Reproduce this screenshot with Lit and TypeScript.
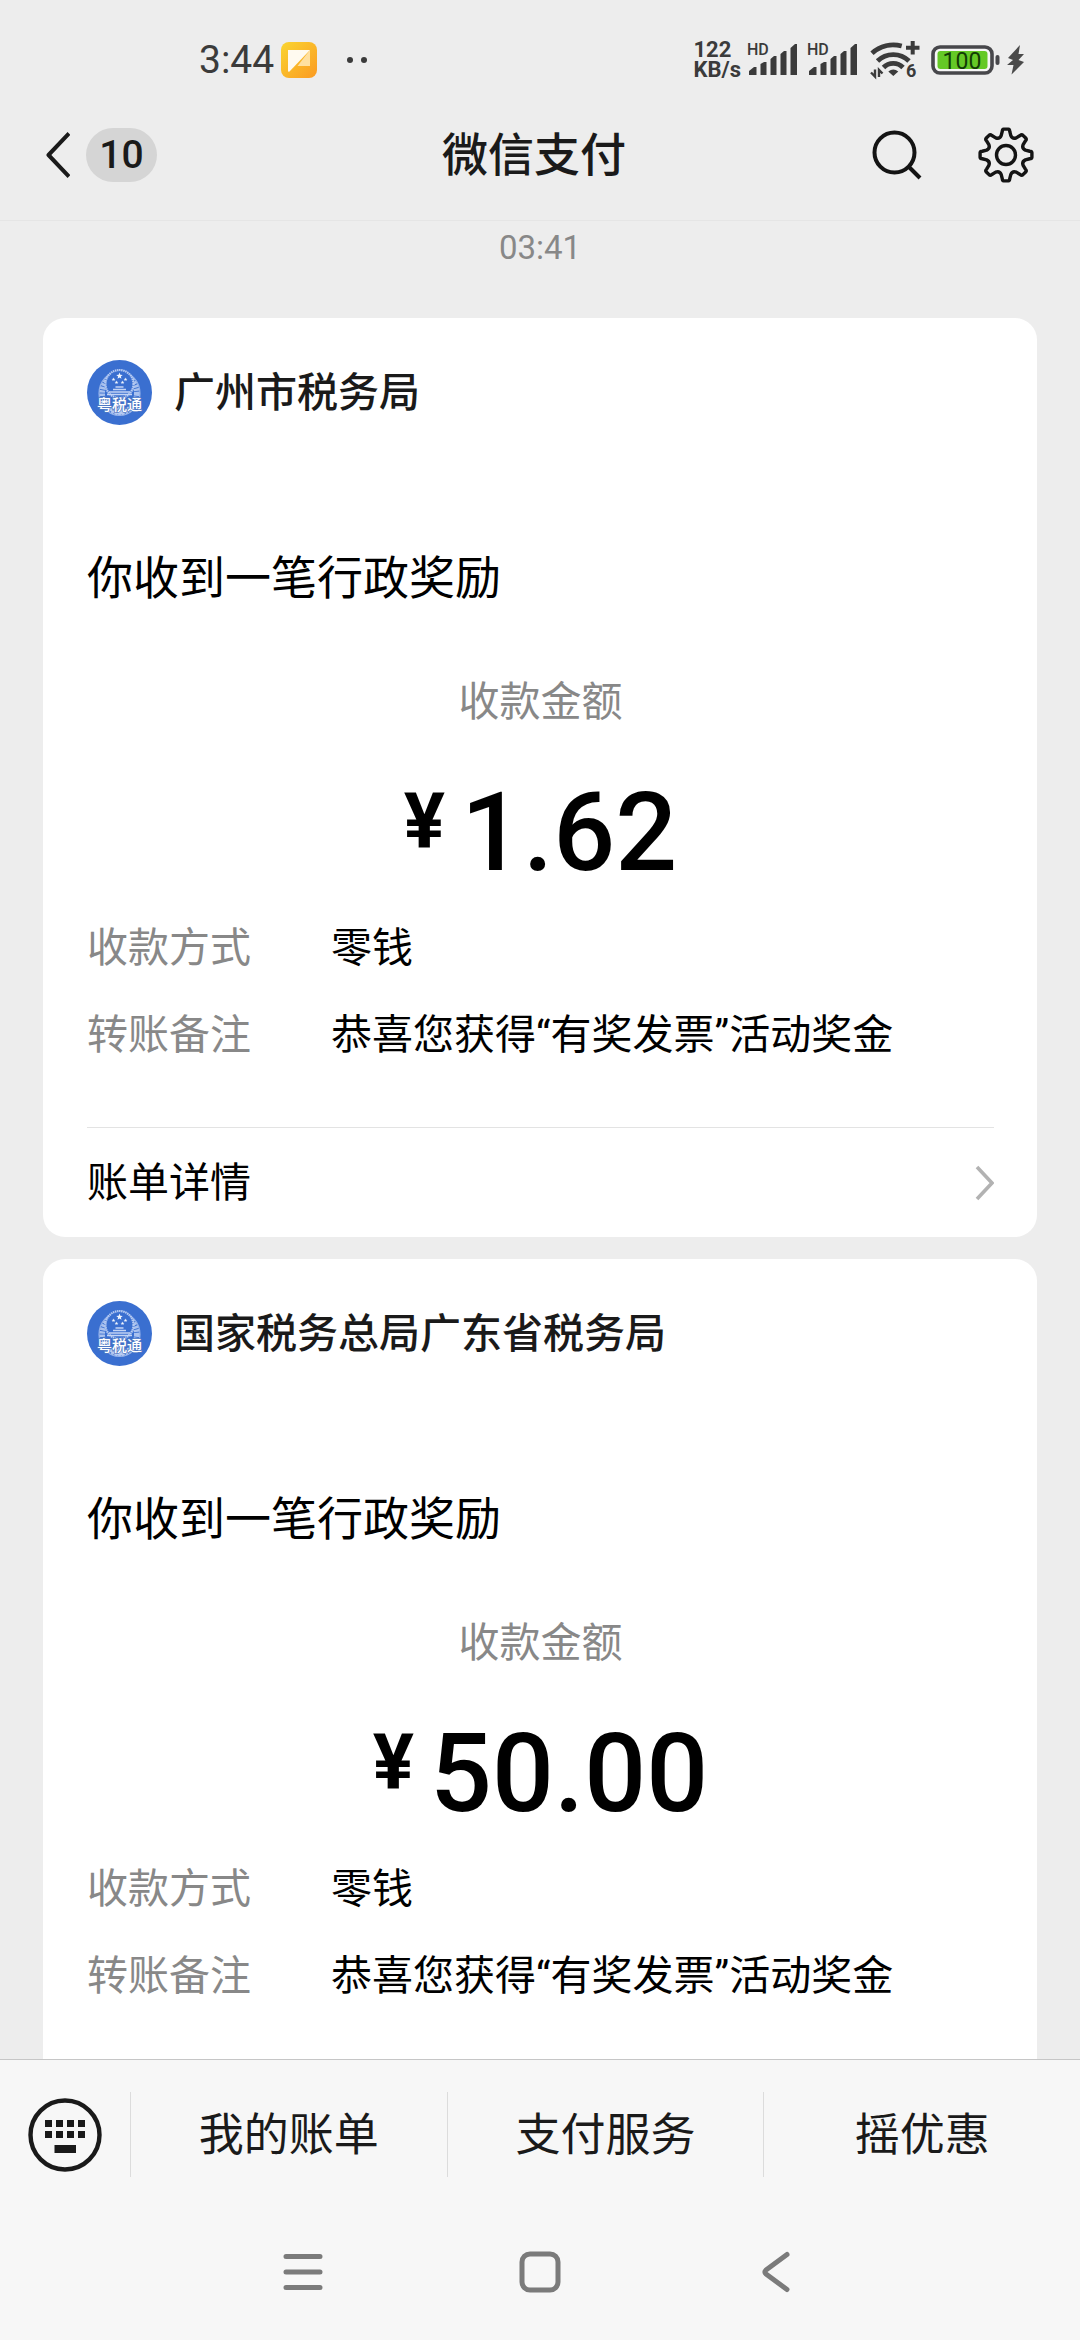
import { LitElement, html, css, svg, nothing } from "lit";
import { customElement, property } from "lit/decorators.js";

interface Payment {
  payer: string;
  title: string;
  amount: string;
  method: string;
  note: string;
  hasDetail: boolean;
}

const payments: Payment[] = [
  {
    payer: "广州市税务局",
    title: "你收到一笔行政奖励",
    amount: "1.62",
    method: "零钱",
    note: "恭喜您获得“有奖发票”活动奖金",
    hasDetail: true,
  },
  {
    payer: "国家税务总局广东省税务局",
    title: "你收到一笔行政奖励",
    amount: "50.00",
    method: "零钱",
    note: "恭喜您获得“有奖发票”活动奖金",
    hasDetail: false,
  },
];

const menuItems = ["我的账单", "支付服务", "摇优惠"];

/** Outline of an eight-toothed gear centred on (cx, cy). */
function gearPath(cx: number, cy: number): string {
  const at = (r: number, deg: number) => {
    const a = ((deg - 90) * Math.PI) / 180;
    return `${(cx + r * Math.cos(a)).toFixed(2)} ${(cy + r * Math.sin(a)).toFixed(2)}`;
  };
  let d = `M${at(20, -14)}`;
  for (let i = 0; i < 8; i++) {
    const a = i * 45;
    d += `L${at(24, a - 9)}Q${at(26, a - 8)} ${at(26, a - 5)}L${at(26, a + 5)}Q${at(26, a + 8)} ${at(24, a + 9)}`;
    d += `L${at(20, a + 14)}Q${at(17, a + 22.5)} ${at(20, a + 31)}`;
  }
  return d + "Z";
}

/** Small five-pointed star. */
function star(cx: number, cy: number, r: number) {
  const pts: string[] = [];
  for (let i = 0; i < 10; i++) {
    const a = (i * 36 - 90) * (Math.PI / 180);
    const q = i % 2 ? r * 0.42 : r;
    pts.push(`${(cx + q * Math.cos(a)).toFixed(2)},${(cy + q * Math.sin(a)).toFixed(2)}`);
  }
  return svg`<polygon points=${pts.join(" ")} fill="#f2f6fd"></polygon>`;
}

const signalIcon = html`
  <svg width="50" height="44" viewBox="0 -4 50 44" fill="#3b3b3b" role="img" aria-label="HD">
    <text x="0" y="13" font-size="16" font-weight="500">HD</text>
    <path d="M2 33V29L7 25H9.500V33ZM13.500 33V22L17 20H19.500V33ZM23.500 33V17L27 14H29.500V33ZM33.500 33V12L37 9H39.500V33ZM43.500 33V6L48 2H50V33Z"></path>
  </svg>`;

const wifiIcon = html`
  <svg width="50" height="40" viewBox="0 0 50 40" fill="none" stroke="#3b3b3b" role="img" aria-label="Wi-Fi 6">
    <path d="M2 13.200A32 32 0 0 1 31.700 6" stroke-width="4.800"></path>
    <path d="M7.500 21A22.500 22.500 0 0 1 39 21" stroke-width="4.800"></path>
    <path d="M13.500 27.500A13.500 13.500 0 0 1 33 27.500" stroke-width="4.800"></path>
    <path d="M18.300 31.500Q23.300 27.500 28.300 31.500L23.300 36Z" fill="#3b3b3b" stroke="none"></path>
    <path d="M42.700 1V14.500M36 7.700H49.500" stroke-width="4"></path>
    <path d="M5 29.500V36.500L1 32.500M9 37V30L12.500 33.500" stroke-width="2.400"></path>
    <text x="36" y="37" font-size="18" font-weight="700" fill="#3b3b3b" stroke="none">6</text>
  </svg>`;

const batteryIcon = html`
  <svg width="69" height="30" viewBox="0 0 69 30" role="img" aria-label="100">
    <rect x="2" y="2" width="59" height="26" rx="7" fill="#f6f6f6" stroke="#47474b" stroke-width="3.600"></rect>
    <rect x="6.500" y="6" width="50" height="18" rx="3" fill="#65c926"></rect>
    <rect x="64.500" y="10" width="4" height="10" rx="2" fill="#47474b"></rect>
    <text x="31" y="23.500" font-size="23" text-anchor="middle" fill="#123c05">100</text>
  </svg>`;

const boltIcon = html`
  <svg width="17" height="30" viewBox="0 0 17 30" aria-hidden="true">
    <path d="M13 0L1 13L6 15L0 20H6.500L4.500 29.500L17 17L11.500 15L17 9H11.500Z" fill="#4a4a4a"></path>
  </svg>`;

const noteIcon = html`
  <svg width="36" height="36" viewBox="0 0 36 36" aria-hidden="true">
    <defs>
      <linearGradient id="note" x1="0" y1="0" x2="1" y2="1">
        <stop offset="0" stop-color="#fad530"></stop>
        <stop offset="1" stop-color="#fb9a22"></stop>
      </linearGradient>
    </defs>
    <rect width="36" height="36" rx="8" fill="url(#note)"></rect>
    <path d="M29 8V24H16.500Z" fill="#ffe0a0"></path>
    <path d="M7 8H29L8.500 29.500Q7 30.500 7 28.500Z" fill="#fffaf0"></path>
  </svg>`;

const emblem = html`
  <svg class="logo" width="65" height="65" viewBox="0 0 65 65" aria-hidden="true">
    <circle cx="32.500" cy="32.500" r="32.500" fill="#3a6fd0"></circle>
    <ellipse cx="32.500" cy="33.500" rx="17.500" ry="19" fill="none" stroke="#a9c1ee" stroke-width="6" stroke-dasharray="2.500 0.900"></ellipse>
    <ellipse cx="32.500" cy="33.500" rx="20.500" ry="22" fill="none" stroke="#93b1e9" stroke-width="1.200"></ellipse>
    <circle cx="32.500" cy="24" r="14" fill="#3a6fd0" stroke="#b7cbf2" stroke-width="2.200" stroke-dasharray="1.500 0.600"></circle>
    ${star(32.5, 16, 3.4)}${star(26.5, 19.5, 2)}${star(38.5, 19.5, 2)}${star(29.5, 22.5, 2)}${star(35.5, 22.5, 2)}
    <path d="M28.500 27H36.500M26 29.500H39M22 32H43M20 34.500H45" stroke="#c3d4f4" stroke-width="1.400"></path>
    <path d="M22 50L32.500 45L43 50L36 54.500H29Z" fill="#b7cbf2"></path>
    <text x="32.500" y="50" font-size="15" font-weight="500" text-anchor="middle" fill="#ffffff" stroke="#5079c4" stroke-width="1.500" paint-order="stroke">粤税通</text>
  </svg>`;

@customElement("payment-card")
export class PaymentCard extends LitElement {
  @property({ attribute: false }) payment!: Payment;

  static styles = css`
    :host {
      display: block;
      background: #ffffff;
      border-radius: 22px;
      color: #000000;
      padding: 42px 43px 0 44px;
      font-size: 41px;
      line-height: 56px;
    }
    .payer {
      display: flex;
      align-items: center;
      gap: 22px;
      color: #1a1a1a;
      font-weight: 500;
    }
    .logo {
      flex: none;
    }
    .title {
      margin: 123px 0 0;
      font-size: 46px;
      font-weight: 400;
      line-height: 60px;
    }
    .summary {
      margin-top: 66px;
      text-align: center;
      color: #888888;
    }
    .amount {
      display: flex;
      justify-content: center;
      align-items: flex-start;
      gap: 16px;
      margin: 48px 0 32px;
      color: #000000;
      font-size: 109px;
      font-weight: 500;
      line-height: 110px;
    }
    .currency {
      font-size: 77px;
      font-weight: 700;
      line-height: 88px;
    }
    .facts {
      display: grid;
      grid-template-columns: 244px 1fr;
      row-gap: 31px;
      margin: 0;
    }
    dt {
      color: #888888;
    }
    dd {
      margin: 0;
    }
    .detail {
      display: flex;
      align-items: center;
      justify-content: space-between;
      margin-top: 64px;
      padding: 27px 0 26px;
      border-top: 1px solid #e3e3e3;
      color: inherit;
      text-decoration: none;
    }
  `;

  render() {
    const p = this.payment;
    return html`
      <div class="payer">${emblem}<span>${p.payer}</span></div>
      <h2 class="title">${p.title}</h2>
      <div class="summary">
        <div>收款金额</div>
        <div class="amount"><span class="currency">¥</span><span>${p.amount}</span></div>
      </div>
      <dl class="facts">
        <dt>收款方式</dt>
        <dd>${p.method}</dd>
        <dt>转账备注</dt>
        <dd>${p.note}</dd>
      </dl>
      ${p.hasDetail
        ? html`<a class="detail" href="#detail">
            <span>账单详情</span>
            <svg width="19" height="36" viewBox="0 0 19 36" fill="none" aria-hidden="true">
              <path d="M2 2L17 18L2 34" stroke="#b2b2b2" stroke-width="3.600"></path>
            </svg>
          </a>`
        : nothing}
    `;
  }
}

@customElement("app-root")
export class AppRoot extends LitElement {
  static styles = css`
    :host {
      display: flex;
      flex-direction: column;
      height: 100vh;
      overflow: hidden;
      background: #ededed;
      color: #1a1a1a;
      font-family: Roboto, "Noto Sans CJK SC", sans-serif;
    }
    svg {
      display: block;
      flex: none;
    }
    button {
      display: flex;
      align-items: center;
      justify-content: center;
      padding: 0;
      border: 0;
      background: none;
      color: inherit;
      font: inherit;
    }
    .status {
      display: flex;
      align-items: center;
      height: 48px;
      padding: 36px 56px 6px 199px;
      color: #3b3b3b;
    }
    .time {
      margin-right: 7px;
      font-size: 39px;
      line-height: 48px;
    }
    .dots {
      margin-left: 29px;
    }
    .speed {
      margin-left: auto;
      margin-right: 6px;
      font-size: 22px;
      font-weight: 700;
      line-height: 20px;
    }
    .signals {
      display: flex;
      gap: 10px;
      margin-right: 13px;
    }
    .power {
      display: flex;
      align-items: center;
      gap: 7px;
      margin-left: 11px;
    }
    .header {
      display: grid;
      grid-template-columns: 1fr auto 1fr;
      align-items: center;
      height: 130px;
      padding: 0 46px 0 34px;
      border-bottom: 1px solid #e5e5e5;
    }
    .back {
      justify-self: start;
      gap: 16px;
      padding-left: 12px;
    }
    .count {
      box-sizing: border-box;
      min-width: 71px;
      padding: 0 12px;
      border-radius: 27px;
      background: #d5d5d5;
      font-size: 39px;
      font-weight: 500;
      line-height: 54px;
    }
    h1 {
      margin: 0;
      font-size: 46px;
      font-weight: 500;
      line-height: 60px;
    }
    .tools {
      display: flex;
      justify-self: end;
      align-items: center;
      gap: 56px;
    }
    .feed {
      flex: 1;
      min-height: 0;
      display: flex;
      flex-direction: column;
      gap: 22px;
      overflow: hidden;
      padding: 7px 43px 0;
    }
    .stamp {
      margin-bottom: 28px;
      text-align: center;
      color: #888888;
      font-size: 33px;
      line-height: 40px;
    }
    payment-card:last-child {
      flex: 1;
      border-bottom-left-radius: 0;
      border-bottom-right-radius: 0;
    }
    .menu {
      display: flex;
      align-items: center;
      padding: 32px 0;
      border-top: 1px solid #c6c6c6;
      background: #f7f7f7;
      font-size: 45px;
      line-height: 60px;
    }
    .keyboard {
      width: 130px;
      height: 85px;
    }
    .entry {
      flex: 1;
      height: 85px;
      padding-top: 2px;
      border-left: 1px solid #dcdcdc;
    }
    .system {
      display: flex;
      justify-content: center;
      gap: 196px;
      padding: 42px 0 47px;
      background: #f7f7f7;
    }
  `;

  render() {
    return html`
      <div class="status">
        <span class="time">3:44</span>
        ${noteIcon}
        <svg class="dots" width="22" height="6" viewBox="0 0 22 6" fill="#3b3b3b" aria-hidden="true">
          <circle cx="4" cy="3" r="3"></circle>
          <circle cx="18" cy="3" r="3"></circle>
        </svg>
        <div class="speed"><div>122</div><div>KB/s</div></div>
        <div class="signals">${signalIcon}${signalIcon}</div>
        ${wifiIcon}
        <div class="power">${batteryIcon}${boltIcon}</div>
      </div>

      <header class="header">
        <button class="back" aria-label="返回">
          <svg width="24" height="46" viewBox="0 0 24 46" fill="none" aria-hidden="true">
            <path d="M23 1.500L2.500 23L23 44.500" stroke="#1a1a1a" stroke-width="4" stroke-linejoin="round"></path>
          </svg>
          <span class="count">10</span>
        </button>
        <h1>微信支付</h1>
        <div class="tools">
          <button aria-label="搜索">
            <svg width="50" height="50" viewBox="0 0 50 50" fill="none" stroke="#141414" stroke-width="4" aria-hidden="true">
              <circle cx="22.500" cy="22.500" r="20"></circle>
              <path d="M37 37L48 48"></path>
            </svg>
          </button>
          <button aria-label="设置">
            <svg width="56" height="56" viewBox="0 0 56 56" fill="none" stroke="#141414" stroke-width="3.400" stroke-linejoin="round" aria-hidden="true">
              <path d=${gearPath(28, 28)}></path>
              <circle cx="28" cy="28" r="9.500"></circle>
            </svg>
          </button>
        </div>
      </header>

      <main class="feed">
        <div class="stamp">03:41</div>
        ${payments.map((p) => html`<payment-card .payment=${p}></payment-card>`)}
      </main>

      <nav class="menu">
        <button class="keyboard" aria-label="键盘">
          <svg width="74" height="74" viewBox="0 0 74 74" aria-hidden="true">
            <circle cx="37" cy="37" r="34.500" fill="none" stroke="#1a1a1a" stroke-width="4.400"></circle>
            <path
              d="M17 22h7v7h-7zM28 22h7v7h-7zM39 22h7v7h-7zM50 22h7v7h-7zM17 33h7v7h-7zM28 33h7v7h-7zM39 33h7v7h-7zM50 33h7v7h-7zM26.500 47h21.500v8h-21.500z"
              fill="#1a1a1a"
            ></path>
          </svg>
        </button>
        ${menuItems.map((label) => html`<button class="entry">${label}</button>`)}
      </nav>

      <div class="system">
        <button aria-label="最近任务">
          <svg width="40" height="42" viewBox="0 0 40 42" fill="none" stroke="#7b7b7b" stroke-width="5" stroke-linecap="round" aria-hidden="true">
            <path d="M3 5.500H37M3 21H37M3 36.500H37"></path>
          </svg>
        </button>
        <button aria-label="主屏幕">
          <svg width="42" height="42" viewBox="0 0 42 42" fill="none" stroke="#7b7b7b" stroke-width="5" aria-hidden="true">
            <rect x="3" y="3" width="36" height="36" rx="8"></rect>
          </svg>
        </button>
        <button aria-label="返回上一级">
          <svg width="40" height="42" viewBox="0 0 40 42" fill="none" stroke="#7b7b7b" stroke-width="5" stroke-linecap="round" stroke-linejoin="round" aria-hidden="true">
            <path d="M30 3.500L9 19Q7 21 9 23L30 38.500"></path>
          </svg>
        </button>
      </div>
    `;
  }
}
